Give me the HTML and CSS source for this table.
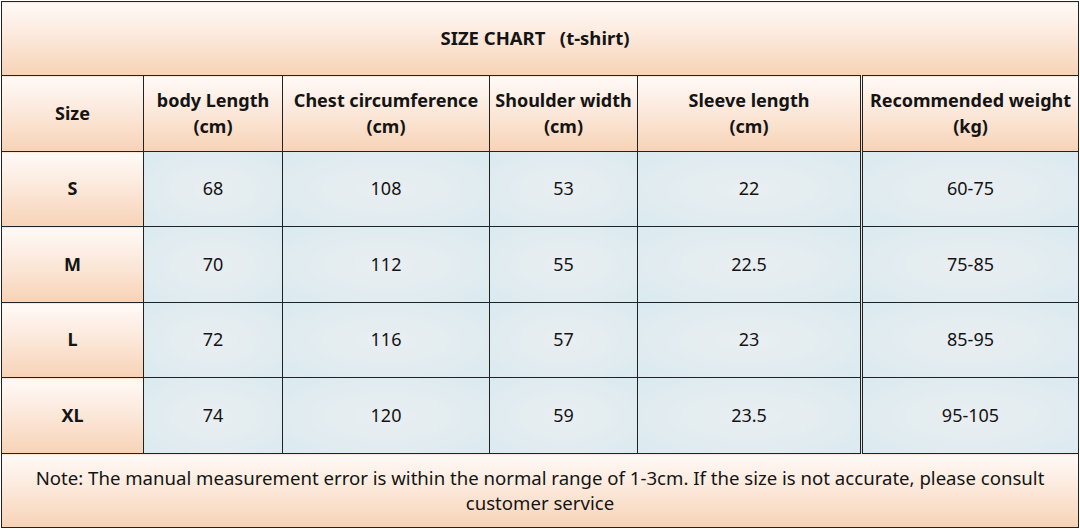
FILE: index.html
```html
<!DOCTYPE html>
<html lang="en">
<head>
<meta charset="utf-8">
<title>Size Chart</title>
<link rel="stylesheet" href="styles.css">
</head>
<body>
<table class="chart">
  <colgroup>
    <col class="c1"><col class="c2"><col class="c3"><col class="c4"><col class="c5"><col class="c6">
  </colgroup>
  <tr class="r-title"><th colspan="6" class="peach title">SIZE CHART&nbsp;&nbsp;&nbsp;(t-shirt)</th></tr>
  <tr class="r-head">
    <th class="peach">Size</th>
    <th class="peach">body Length<br>(cm)</th>
    <th class="peach">Chest circumference<br>(cm)</th>
    <th class="peach">Shoulder width<br>(cm)</th>
    <th class="peach">Sleeve length<br>(cm)</th>
    <th class="peach last">Recommended weight<br>(kg)</th>
  </tr>
  <tr class="r-a">
    <th class="peach">S</th><td>68</td><td>108</td><td>53</td><td>22</td><td class="last">60-75</td>
  </tr>
  <tr class="r-b">
    <th class="peach">M</th><td>70</td><td>112</td><td>55</td><td>22.5</td><td class="last">75-85</td>
  </tr>
  <tr class="r-a">
    <th class="peach">L</th><td>72</td><td>116</td><td>57</td><td>23</td><td class="last">85-95</td>
  </tr>
  <tr class="r-b">
    <th class="peach">XL</th><td>74</td><td>120</td><td>59</td><td>23.5</td><td class="last">95-105</td>
  </tr>
  <tr class="r-note">
    <td colspan="6" class="peach note">Note: The manual measurement error is within the normal range of 1-3cm. If the size is not accurate, please consult<br>customer service</td>
  </tr>
</table>
</body>
</html>
```
FILE: styles.css
```css
html, body {
  margin: 0;
  padding: 0;
  background: #ffffff;
}
body {
  padding: 1px;
  font-family: "Noto Sans", "Open Sans", sans-serif;
  color: #141414;
}
.chart {
  border-collapse: collapse;
  table-layout: fixed;
  width: 1078px;
}
.c1 { width: 142px; }
.c2 { width: 139px; }
.c3 { width: 207px; }
.c4 { width: 148px; }
.c5 { width: 224px; }
.c6 { width: 217px; }

.chart th, .chart td {
  border: 1px solid #222;
  padding: 0 0 2px 0;
  text-align: center;
  vertical-align: middle;
  font-size: 18px;
  line-height: 26px;
}
.chart th { font-weight: 700; }
.chart td { font-weight: 400; }
.chart .title { font-size: 18.5px; padding-right: 10px; }
.chart td:not(.peach) {
  background: radial-gradient(ellipse at center, #e9eef1 0%, #e2ecf0 55%, #d9eaf0 100%);
}
.chart .last { border-left: 3px double #222; }
.peach {
  background: linear-gradient(to bottom, #fffaf7 0%, #fcebdf 40%, #f7d3b6 100%);
}
.r-title { height: 74px; }
.r-head { height: 76px; }
.r-a { height: 75px; }
.r-b { height: 76px; }
.r-note { height: 74px; }
.chart .note {
  font-size: 18.6px;
  line-height: 25px;
  vertical-align: top;
  padding: 11px 0 0 0;
}
```
